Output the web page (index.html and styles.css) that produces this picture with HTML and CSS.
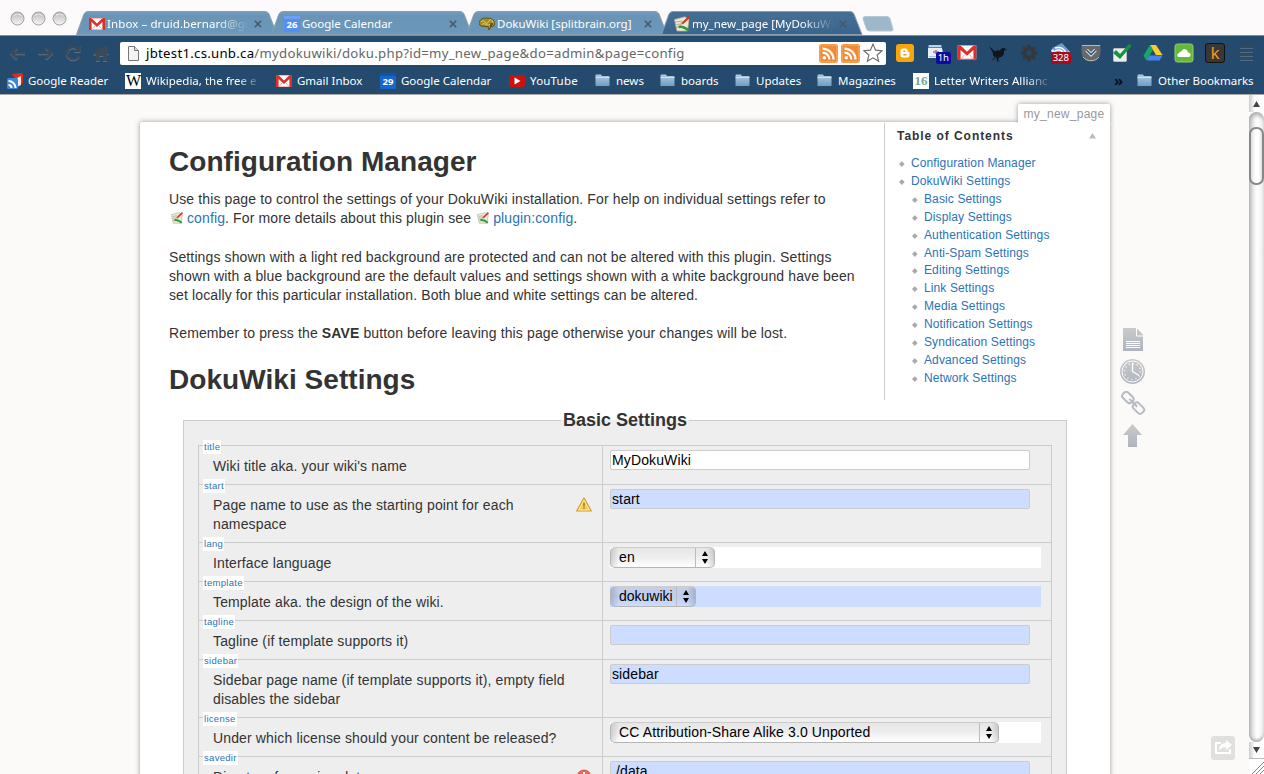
FILE: index.html
```html
<!DOCTYPE html>
<html lang="en">
<head>
<meta charset="utf-8">
<title>my_new_page [MyDokuWiki]</title>
<link rel="stylesheet" href="styles.css">
</head>
<body>
<svg class="defs" width="0" height="0">
  <defs>
    <linearGradient id="gTab" x1="0" y1="0" x2="0" y2="1"><stop offset="0" stop-color="#739ebd"/><stop offset=".2" stop-color="#6994b5"/><stop offset="1" stop-color="#6b98bb"/></linearGradient>
    <linearGradient id="gAct" x1="0" y1="0" x2="0" y2="1"><stop offset="0" stop-color="#466f94"/><stop offset="1" stop-color="#3b658b"/></linearGradient>
    <linearGradient id="gLight" x1="0" y1="0" x2="0" y2="1"><stop offset="0" stop-color="#b4b4b4"/><stop offset=".5" stop-color="#d8d8d8"/><stop offset="1" stop-color="#f6f6f6"/></linearGradient>
    <linearGradient id="gFold" x1="0" y1="0" x2="0" y2="1"><stop offset="0" stop-color="#b1cde0"/><stop offset="1" stop-color="#6f9dc3"/></linearGradient>
    <linearGradient id="gTool" x1="0" y1="0" x2="0" y2="1"><stop offset="0" stop-color="#c9cacb"/><stop offset="1" stop-color="#afb4bf"/></linearGradient>
    <symbol id="tab" viewBox="0 0 202 24"><path d="M.5 23.500 8 3Q9 .5 12 .5H189Q192 .5 193 3L201 23.500Z" stroke="#8b9dac" stroke-width="1"/></symbol>
    <symbol id="gmail" viewBox="0 0 16 12"><path fill="#fff" d="M0 0h16v12H0z"/><path fill="#d8322a" d="M0 0h2.400L8 5.600 13.600 0H16v12h-2.600V4L8 9 2.600 4v8H0z"/><path fill="none" stroke="#e88" stroke-width=".7" d="M3 11.500 6 8M13 11.500 10 8M2 .3h12M2 11.700h12"/></symbol>
    <symbol id="rss" viewBox="0 0 19 19"><rect width="19" height="19" rx="3" fill="#f08a34"/><rect x="1" y="1" width="17" height="17" rx="2" fill="none" stroke="#f8b26a"/><circle cx="5.300" cy="13.700" r="1.800" fill="#fff"/><path d="M3.500 8.600a6.900 6.900 0 0 1 6.900 6.900M3.500 4.600a11 11 0 0 1 11 10.900" fill="none" stroke="#fff" stroke-width="2.200"/></symbol>
    <symbol id="folder" viewBox="0 0 15 13"><path fill="url(#gFold)" d="M.5 1.500Q.5.500 1.500.500H6l1 1.500h6.500Q14.500 2 14.500 3v8.500Q14.500 12 14 12H1Q.5 12 .5 11.500z"/><path d="M.5 3.500h14" stroke="#dbe9f3" stroke-width=".8"/></symbol>
    <symbol id="doku" viewBox="0 0 16 16"><path fill="#efe9da" stroke="#b7ab90" stroke-width=".8" d="M.5 3.500 11 .8 15 3.500 13.500 15H3z"/><path d="M2 6 8 5M2.500 8.500 6.500 8M3 11h3" stroke="#a09684" stroke-width=".8"/><path d="M15.300.8 8 7.800" stroke="#cf3c25" stroke-width="2.200"/><path d="M8.800 7 5.500 10.500 7 6.500z" fill="#d99a62"/><path d="M4.500 11Q9 9.500 14.500 14.500" stroke="#24a33a" stroke-width="2.500" fill="none"/></symbol>
    <symbol id="x" viewBox="0 0 8 8"><path d="M.8.800 7.200 7.200M7.200.800.8 7.200" stroke="#455869" stroke-width="1.500"/></symbol>
    <symbol id="ud" viewBox="0 0 8 13"><path d="M4 0 7 5H1zM4 13 1 8h6z"/></symbol>
    <symbol id="light" viewBox="0 0 15 15"><circle cx="7.500" cy="7.500" r="6.500" fill="url(#gLight)" stroke="#a2a2a2"/><path d="M4 4.500Q7.500 1.500 11 4.500" fill="none" stroke="#eee" stroke-width="1.200"/></symbol>
  </defs>
</svg>

<header class="browser">
  <div class="tabstrip">
    <div class="lights"><svg><use href="#light"/></svg><svg><use href="#light"/></svg><svg><use href="#light"/></svg></div>
    <div class="tab"><svg class="shape" fill="url(#gTab)"><use href="#tab"/></svg><svg class="fav" viewBox="0 0 16 16"><use href="#gmail" y="2" width="16" height="12"/></svg><span class="ttl fade t1">Inbox – druid.bernard@gm</span><svg class="x"><use href="#x"/></svg></div>
    <div class="tab"><svg class="shape" fill="url(#gTab)"><use href="#tab"/></svg><span class="fav cal lite">26</span><span class="ttl">Google Calendar</span><svg class="x"><use href="#x"/></svg></div>
    <div class="tab"><svg class="shape" fill="url(#gTab)"><use href="#tab"/></svg><svg class="fav" viewBox="0 0 16 16"><path d="M0 8Q0 2 7 2q9 0 9 6-1 3-4 2.500L10 14 9 10.500Q1 11 0 8" fill="#a38c22" stroke="#5f5216" stroke-width="1"/><path d="M2 6q2-3 4 0t4-1 4 2M3 8.500q2-2 4 0t5-1" fill="none" stroke="#dccb6c"/><path d="M11 8h3M11 10h2" stroke="#5b4310" stroke-width="1.500"/></svg><span class="ttl">DokuWiki [splitbrain.org]</span><svg class="x"><use href="#x"/></svg></div>
    <div class="tab active"><svg class="shape" fill="url(#gAct)"><use href="#tab"/></svg><svg class="fav"><use href="#doku"/></svg><span class="ttl fade">my_new_page [MyDokuWi</span><svg class="x"><use href="#x"/></svg></div>
    <svg class="newtab" viewBox="0 0 32 16"><path d="M3 .5H25q2 0 3 2L31 13q.4 2-1.500 2H8q-3 0-3.500-2L1 3Q.6.600 3 .5" fill="#9db8cb" stroke="#b5c8d5"/></svg>
  </div>

  <div class="toolbar">
    <div class="nav">
      <svg viewBox="0 0 18 18"><path d="M3 9h14M9 3.500 3.500 9 9 14.500"/></svg>
      <svg viewBox="0 0 18 18"><path d="M2 9h14M10 3.500 15.500 9 10 14.500"/></svg>
      <svg viewBox="0 0 18 18"><path d="M14.500 11.500A6 6 0 1 1 13.500 5"/><path class="solid" d="M9.500 8h7V1z"/></svg>
      <svg viewBox="0 0 18 18"><path class="solid" d="M1 9.500 9 2l3 2.500V2h2.500v5L17 9.500l-1.200 1.200L15 10v7h-4v-5H7.500v5H4v-7l-1.500.9z"/></svg>
    </div>
    <div class="omni">
      <svg class="doc" viewBox="0 0 11 15"><path d="M.5.500h6l4 4v10H.5z" fill="#f4f4f4" stroke="#777"/><path d="M6.500.500v4h4" fill="#ddd" stroke="#777"/></svg>
      <span class="url"><b>jbtest1.cs.unb.ca</b>/mydokuwiki/doku.php?id=my_new_page&amp;do=admin&amp;page=config</span>
      <svg class="r"><use href="#rss"/></svg><svg class="r"><use href="#rss"/></svg>
      <svg class="star" viewBox="0 0 18 18"><path d="m9 1 2.300 5.400 5.900.500-4.500 3.900 1.400 5.700L9 13.400 3.900 16.500l1.400-5.700L.8 6.900l5.900-.5z" fill="#fff" stroke="#6a6a6a" stroke-width="1"/></svg>
    </div>
    <div class="ext">
      <svg viewBox="0 0 20 20"><rect x="1" y="1" width="18" height="18" rx="3" fill="#f9a60c"/><path d="M8 5.500h2.500q2 0 2 2 0 1 .7 1.200 1.300.4 1.300 1.600v1.700q0 2.500-2.500 2.500H8q-2.500 0-2.500-2.500V8q0-2.500 2.500-2.500" fill="#fff"/><path d="M8.300 8.200h2M8.300 11.700h3.200" stroke="#f59b0c" stroke-width="1.500"/></svg>
      <div class="e"><svg viewBox="0 0 20 20"><path fill="#4e86c6" d="M2 2h14v4H2z"/><path fill="#e8eef6" d="M2 5h14l2 10H2z"/><path d="M3 3h12" stroke="#dceafa" stroke-width="1.500"/><path d="M3 13.500h14" stroke="#9fc0e2"/><path d="M7 9q3-3 6 0-3 3-6 0" fill="#fff" stroke="#d66"/><circle cx="10" cy="9" r="1" fill="#479"/></svg><span class="badge blue">1h</span></div>
      <svg viewBox="0 0 20 20"><use href="#gmail" x=".5" y="2" width="19" height="14.500"/></svg>
      <svg viewBox="0 0 20 20"><path d="M1 3 7 8.500q3-2 5-1 1-3 4-2.500l3 2-3 .5q1 6-5 7l-1 3 2 1H9l-.5-4Q4 13 5 10z" fill="#111519"/><path d="m7 13-1 3-2 1" fill="none" stroke="#222" stroke-width="1"/></svg>
      <svg viewBox="0 0 20 20"><circle cx="10" cy="10" r="4.500" fill="none" stroke="#35393d" stroke-width="4"/><path d="M10 1.500v4M10 14.500v4M1.500 10h4M14.500 10h4M4 4l3 3M13 13l3 3M16 4l-3 3M7 13l-3 3" stroke="#35393d" stroke-width="3"/></svg>
      <div class="e"><svg viewBox="0 0 20 20"><path d="M1 7 12 1l8 8-9 6-8-2z" fill="#e3edf8"/><path d="M2 5 12 0l7 8-9 6z" fill="#6c9ad2"/><path d="M6 11q3-2 5 2M5 8q6-3 9 3M5 5q8-2 11 5" fill="none" stroke="#fff" stroke-width="1.400"/></svg><span class="badge red">328</span></div>
      <svg viewBox="0 0 20 20"><path d="M.5 2h19v7a9.500 9.500 0 0 1-19 0z" fill="#67686a"/><path d="M1 2.500h18M2 14a9.500 8 0 0 0 16 0" fill="none" stroke="#bbb"/><path d="m5.500 7 4.500 4.500L14.500 7" fill="none" stroke="#ddd" stroke-width="3.500"/><path d="m5.500 7 4.500 4.500L14.500 7" fill="none" stroke="#2f5273" stroke-width="1.500"/></svg>
      <svg viewBox="0 0 20 20"><rect x="1.500" y="5.500" width="13" height="13" rx="1" fill="#eee" stroke="#bbb"/><path d="m1 10 3-3 4 4L17 1l2.500 2L8 16z" fill="#12963b"/></svg>
      <svg viewBox="0 0 20 20"><path d="M7 2h6l6.500 10H13z" fill="#f8cb30"/><path d="M7 2 .5 12.500l3 5L10 7z" fill="#16a765"/><path d="M6.500 12.500h13l-3 5h-13z" fill="#4384ef"/></svg>
      <svg viewBox="0 0 20 20"><rect x="1" y="1" width="18" height="18" rx="2.500" fill="#65b83c" stroke="#94cf66"/><path d="M4 14q-2-3 1-4 1-2 2.500-1.500Q9 5 12 6.500q2 1 2 3 3 .3 2.500 3-.5 1.500-2 1.500z" fill="#fff"/></svg>
      <span class="k">k</span>
      <svg viewBox="0 0 20 20"><path d="M4 4h13M4 8h13M4 12h13M4 16h13" stroke="#35495c" stroke-width="2"/><path d="M4 5.500h13M4 9.500h13M4 13.500h13M4 17.500h13" stroke="#55748f" stroke-width=".8"/></svg>
    </div>
  </div>

  <div class="bookmarks">
    <span class="bm"><svg viewBox="0 0 16 16"><path fill="#d8301e" d="M5 1 14 0l2 1v9l-3 2z"/><path fill="#f3e5df" d="M14 3v9l-6 3V6z"/><rect y="5" width="11" height="11" rx="1.500" fill="#3b84d8"/><path d="M1.500 12a3 3 0 0 1 3 3M1.500 8a7 7 0 0 1 7 7" fill="none" stroke="#fff" stroke-width="2"/></svg><i>Google Reader</i></span>
    <span class="bm"><span class="wiki">W</span><i class="fade b2">Wikipedia, the free e</i></span>
    <span class="bm"><svg viewBox="0 0 16 16"><use href="#gmail" y="2" width="16" height="12"/></svg><i>Gmail Inbox</i></span>
    <span class="bm"><span class="cal">29</span><i>Google Calendar</i></span>
    <span class="bm"><svg viewBox="0 0 16 16"><rect y="2" width="16" height="12" rx="2.500" fill="#c9120e"/><path d="M5.500 4.500v7l6-3.500z" fill="#fff"/></svg><i class="b5">YouTube</i></span>
    <span class="bm"><svg><use href="#folder" width="15" height="13" y="1"/></svg><i>news</i></span>
    <span class="bm"><svg><use href="#folder" width="15" height="13" y="1"/></svg><i>boards</i></span>
    <span class="bm"><svg><use href="#folder" width="15" height="13" y="1"/></svg><i>Updates</i></span>
    <span class="bm"><svg><use href="#folder" width="15" height="13" y="1"/></svg><i>Magazines</i></span>
    <span class="bm"><span class="s16">16</span><i class="fade b10">Letter Writers Allianc</i></span>
    <b class="more">»</b>
    <span class="bm"><svg><use href="#folder" width="15" height="13" y="1"/></svg><i>Other Bookmarks</i></span>
  </div>
</header>

<div class="viewport">
  <div class="site">
    <div class="page">
      <span class="pageid">my_new_page</span>
      <nav class="toc">
        <h3>Table of Contents <svg viewBox="0 0 7 6"><path d="M3.500 0 7 5.500H0z" fill="#bbb"/></svg></h3>
        <ul>
          <li>Configuration Manager</li>
          <li>DokuWiki Settings
            <ul><li>Basic Settings</li><li>Display Settings</li><li>Authentication Settings</li><li>Anti-Spam Settings</li><li>Editing Settings</li><li>Link Settings</li><li>Media Settings</li><li>Notification Settings</li><li>Syndication Settings</li><li>Advanced Settings</li><li>Network Settings</li></ul>
          </li>
        </ul>
      </nav>
      <article class="text">
        <h1>Configuration Manager</h1>
        <p>Use this page to control the settings of your DokuWiki installation. For help on individual settings refer to<br><svg class="iw"><use href="#doku"/></svg><a>config</a>. For more details about this plugin see <svg class="iw"><use href="#doku"/></svg><a>plugin:config</a>.</p>
        <p>Settings shown with a light red background are protected and can not be altered with this plugin. Settings<br>shown with a blue background are the default values and settings shown with a white background have been<br>set locally for this particular installation. Both blue and white settings can be altered.</p>
        <p>Remember to press the <b>SAVE</b> button before leaving this page otherwise your changes will be lost.</p>
        <h1>DokuWiki Settings</h1>
      </article>
      <fieldset>
        <legend>Basic Settings</legend>
        <div class="table">
          <div class="row"><div class="label"><span class="key">title</span>Wiki title aka. your wiki's name</div><div class="val"><div class="inp white">MyDokuWiki</div></div></div>
          <div class="row"><div class="label"><span class="key">start</span>Page name to use as the starting point for each<br>namespace<svg class="alert" viewBox="0 0 16 15"><path d="M8 1 15.300 14H.7z" fill="#fff3b8" stroke="#d9952b" stroke-width="1.200" stroke-linejoin="round"/><path d="M8 4 12.800 12.600H3.200z" fill="#f6cf45"/><path d="M8 5.500v4M8 10.500v1.500" stroke="#a87a1c" stroke-width="1.500"/></svg></div><div class="val"><div class="inp">start</div></div></div>
          <div class="row"><div class="label"><span class="key">lang</span>Interface language</div><div class="val"><div class="sel white"><div class="pop w1"><span>en</span><svg><use href="#ud"/></svg></div></div></div></div>
          <div class="row"><div class="label"><span class="key">template</span>Template aka. the design of the wiki.</div><div class="val"><div class="sel"><div class="pop w2"><span>dokuwiki</span><svg><use href="#ud"/></svg></div></div></div></div>
          <div class="row"><div class="label"><span class="key">tagline</span>Tagline (if template supports it)</div><div class="val"><div class="inp"></div></div></div>
          <div class="row"><div class="label"><span class="key">sidebar</span>Sidebar page name (if template supports it), empty field<br>disables the sidebar</div><div class="val"><div class="inp">sidebar</div></div></div>
          <div class="row"><div class="label"><span class="key">license</span>Under which license should your content be released?</div><div class="val"><div class="sel white"><div class="pop w3"><span>CC Attribution-Share Alike 3.0 Unported</span><svg><use href="#ud"/></svg></div></div></div></div>
          <div class="row"><div class="label"><span class="key">savedir</span>Directory for saving data<svg class="alert" viewBox="0 0 16 15"><circle cx="8" cy="8" r="7" fill="#ee6a55" stroke="#d9543f"/><path d="M8 3v5M8 10v2" stroke="#fff" stroke-width="2"/></svg></div><div class="val"><div class="inp">./data</div></div></div>
        </div>
      </fieldset>
    </div>
    <aside class="tools">
      <svg viewBox="0 0 26 26"><path fill="url(#gTool)" d="M3 1h13.500L23 7.500V24H3z"/><path d="M16.500 1v8H23M6 14.500h14M6 16.500h14M6 18.500h14M6 20.500h14" fill="none" stroke="#fff" stroke-width="1"/></svg>
      <svg viewBox="0 0 26 26"><circle cx="12.500" cy="12.500" r="12.500" fill="url(#gTool)"/><circle cx="12.500" cy="12.500" r="10.500" fill="none" stroke="#fff" stroke-width="1"/><circle cx="12.500" cy="12.500" r="8" fill="none" stroke="#fff" stroke-width="1.500" stroke-dasharray="1 3.190"/><path d="M12.500 4v8.500l6.500 4" fill="none" stroke="#fff" stroke-width="1.300"/></svg>
      <svg viewBox="0 0 26 26"><g transform="rotate(45 13 12)" fill="none" stroke="#b7bac1" stroke-width="2"><rect x="-.5" y="8" width="12" height="7.500" rx="3"/><rect x="14.500" y="8" width="12" height="7.500" rx="3"/><path d="M7.500 11.700h11"/></g></svg>
      <svg viewBox="0 0 26 26"><path fill="url(#gTool)" d="m12.500 1 9.500 11h-5v12H8V12H3z"/></svg>
    </aside>
    <svg class="share" viewBox="0 0 24 24"><rect width="24" height="24" rx="3" fill="#e0e0de"/><path d="M10 7H5v10h14v-4" fill="none" stroke="#fff" stroke-width="2"/><path d="M8 14q0-7 7-7V4l6 5-6 5v-3q-4 0-7 3" fill="#fff"/></svg>
  </div>
  <div class="scroll">
    <div class="arr"><svg viewBox="0 0 7 6"><path d="M3.500 0 7 6H0z"/></svg></div>
    <div class="track"><div class="thumb"></div></div>
    <div class="arr dn"><svg viewBox="0 0 7 6"><path d="M0 0h7L3.500 6z"/></svg></div>
    <div class="grip"><svg viewBox="0 0 15 15"><path d="M3 15 15 3M7 15l8-8M11 15l4-4" stroke="#888"/></svg></div>
  </div>
</div>
</body>
</html>
```

FILE: styles.css
```css
* { box-sizing: border-box; }
body { margin: 0; width: 1264px; height: 774px; overflow: hidden; display: flex; flex-direction: column; font-family: "Liberation Sans", Arial, sans-serif; font-size: 14px; line-height: 19px; color: #333; background: #fbfaf9; }
svg { display: block; flex: none; }
.defs { position: absolute; }

/* Browser chrome */
.browser { height: 95px; flex: none; background: #244b6e; border-bottom: 1px solid #aaa6a4; font-family: "Noto Sans", sans-serif; color: #fff; }
.tabstrip { height: 36px; background: #fcfafb; display: flex; align-items: flex-end; border-bottom: 1px solid #7690a6; }
.lights { width: 76px; padding: 0 0 9px 10px; display: flex; gap: 6px; }
.lights svg { width: 15px; height: 15px; }
.tab { position: relative; width: 202px; height: 24px; margin-right: -7px; display: flex; align-items: center; padding: 1px 0 0 13px; }
.tab .shape { position: absolute; left: 0; top: 0; width: 202px; height: 24px; }
.tab > *:not(.shape) { position: relative; }
.active { z-index: 1; }
.fav { width: 16px; height: 16px; flex: none; }
.ttl { margin-left: 2px; font-size: 11.5px; line-height: 16px; white-space: nowrap; width: 142px; flex: none; }
.t1 { letter-spacing: .1px; }
.x { width: 8px; height: 8px; margin-left: 5px; }
.fade { -webkit-mask-image: linear-gradient(90deg, #000 78%, transparent); mask-image: linear-gradient(90deg, #000 78%, transparent); }
.newtab { width: 32px; height: 16px; margin: 0 0 3px 6px; }
.cal { width: 16px; height: 16px; flex: none; background: #1765cf; border-top: 3px solid #0d55b5; font: bold 9.5px/12px "Noto Sans", sans-serif; text-align: center; color: #fff; }
.cal.lite { background: #548ff0; border-color: #6ba0f5; }
.toolbar { height: 34px; display: flex; align-items: center; padding-left: 8px; }
.nav { display: flex; gap: 10px; width: 112px; }
.nav svg { width: 18px; height: 18px; fill: none; stroke: #3a4a59; stroke-width: 2.6; filter: drop-shadow(0 1px 0 #55758f); }
.nav .solid { fill: #3a4a59; stroke: none; }
.omni { width: 766px; height: 23px; background: #fff; border-radius: 2px; display: flex; align-items: center; padding-left: 8px; }
.doc { width: 11px; height: 15px; }
.url { margin-left: 7px; width: 673px; font-size: 13.2px; line-height: 20px; color: #666; letter-spacing: .27px; white-space: nowrap; }
.url b { font-weight: 400; color: #000; }
.omni .r { width: 19px; height: 19px; margin-right: 3px; }
.omni .star { width: 20px; height: 20px; }
.ext { display: flex; gap: 11px; padding-left: 9px; }
.ext svg, .e, .k { width: 20px; height: 20px; flex: none; }
.e { position: relative; }
.badge { position: absolute; top: 9px; right: -5px; height: 12px; padding: 0 2px; border-radius: 2px; font: 9.500px/12px "Noto Sans", sans-serif; color: #fff; }
.blue { background: #0b0ba0; }
.red { background: #a60b20; right: -1px; }
.k { background: #373737; border: 1px solid #111; border-radius: 3px; color: #f79a12; font: 17px/17px "Noto Sans", sans-serif; text-align: center; }
.bookmarks { height: 22px; display: grid; grid-template-columns: 118px 151px 104px 129px 86px 65px 75px 82px 96px 203px 21px 120px; align-items: center; padding-left: 7px; }
.bm { display: flex; align-items: center; }
.bm > svg { width: 16px; height: 16px; }
.bm i { font-style: normal; font-size: 11.5px; line-height: 16px; margin-left: 5px; white-space: nowrap; }
.bm .b5 { letter-spacing: .2px; }
.wiki { width: 16px; height: 16px; background: #fff; color: #000; font: 16px/16px "Liberation Serif", serif; letter-spacing: -1px; text-align: center; }
.s16 { width: 16px; height: 16px; background: #fff; color: #7aa29c; font: bold 13px/16px "Liberation Serif", serif; text-align: center; }
.b2 { width: 116px; }
.b10 { width: 118px; letter-spacing: .05px; }
.more { font-size: 15px; line-height: 14px; color: #071019; margin: -3px 0 0 -2px; }

/* Wiki page */
.viewport { flex: 1; min-height: 0; display: flex; }
.site { position: relative; width: 1249px; display: flex; padding: 27px 0 0 140px; overflow: hidden; }
.page { position: relative; width: 970px; height: 720px; flex: none; background: #fff; border-radius: 2px 0 0 0; box-shadow: 0 0 5px #999; }
.pageid { position: absolute; right: 0; top: -18px; width: 92px; height: 19px; background: #fff; border-radius: 2px 2px 0 0; box-shadow: 0 0 5px #999; clip-path: inset(-5px -5px 0 -5px); font-size: 12px; line-height: 20px; letter-spacing: .25px; color: #999; text-align: center; }
.toc { float: right; width: 226px; height: 277px; margin-top: 1px; border-left: 1px solid #ccc; padding: 4px 14px 0 12px; font-size: 12px; line-height: 18px; letter-spacing: .12px; color: #2b73b7; position: relative; }
.toc h3 { margin: 0 0 9.900px; font-size: 12px; line-height: 18px; letter-spacing: .95px; color: #333; display: flex; justify-content: space-between; align-items: center; }
.toc h3 svg { width: 7px; height: 6px; }
.toc ul { list-style: none; margin: 0; padding: 0 0 0 14px; line-height: 17.920px; }
.toc ul ul { padding-left: 13px; }
.toc li::before { content: ""; float: left; width: 3.600px; height: 3.600px; margin: 7px 0 0 -11.300px; background: #aaa; transform: rotate(45deg); }
.text { padding: 24px 0 0 29px; letter-spacing: .12px; }
h1 { margin: 0; font-size: 28px; line-height: 32px; height: 44px; letter-spacing: .05px; }
p { margin: 0 0 19.500px; white-space: nowrap; }
.text p + h1 { padding-top: 1px; height: 48px; }
a { color: #2b73b7; }
.iw { display: inline-block; width: 12px; height: 12px; margin: 0 4px 0 2px; vertical-align: -1px; }
fieldset { width: 884px; margin: 0 0 0 43px; padding: 14px 14px 0; border: 1px solid #ccc; border-bottom: 0; background: #eee; height: 400px; }
legend { margin: 0 auto; padding: 0 2px; font-size: 18px; font-weight: 700; line-height: 20px; position: relative; top: -1px; }
.table { border: 1px solid #ccc; border-top: 0; width: 854px; }
.row { display: flex; border-top: 1px solid #ccc; }
.label { position: relative; width: 404px; padding: 11px 0 8px 14px; border-right: 1px solid #ccc; white-space: nowrap; letter-spacing: .14px; }
.key { position: absolute; left: 4px; top: -6px; height: 14px; padding: 0 1px; background: #fff; color: #2b73b7; font-size: 9.500px; line-height: 14px; letter-spacing: .3px; }
.alert { position: absolute; right: 10px; top: 12px; width: 16px; height: 15px; }
.val { padding: 4px 0 0 7px; color: #000; letter-spacing: .12px; }
.inp { width: 420px; height: 20px; border: 1px solid #ccc; border-radius: 2px; background: #cdf; padding-left: 1px; line-height: 19px; }
.sel { width: 431px; height: 21px; background: #cdf; }
.white { background: #fff; }
.pop { height: 21px; border: 1px solid #b5b5b5; border-top-color: #ccc; border-radius: 5px; display: flex; background: linear-gradient(90deg, #0002, #0000 8px, #0000 calc(100% - 8px), #0002), linear-gradient(#e6e6e6, #eee 50%, #fff); line-height: 19px; padding-left: 8px; }
.sel:not(.white) .pop { background: linear-gradient(90deg, #0002, #0000 8px, #0000 calc(100% - 8px), #0002), linear-gradient(#c5cfe6, #becdee 50%, #cdf); }
.pop span { flex: 1; border-right: 1px solid #bbb; }
.pop svg { width: 8px; height: 13px; margin: 3px 5px; }
.w1 { width: 105px; }
.w2 { width: 86px; letter-spacing: 0; }
.w3 { width: 389px; }
.tools { padding: 205px 0 0 10px; display: flex; flex-direction: column; gap: 6px; }
.tools svg { width: 26px; height: 26px; }
.share { position: absolute; left: 1211px; top: 641px; width: 24px; height: 24px; }

/* Scrollbar */
.scroll { width: 15px; display: flex; flex-direction: column; background: #fff; }
.arr { height: 17px; display: flex; align-items: center; justify-content: center; background: linear-gradient(90deg, #ccc, #fff 6px); }
.arr svg { width: 7px; height: 6px; fill: #444; }
.track { flex: 1; border-radius: 8px; background: linear-gradient(90deg, #bbb, #eee 5px, #fff 8px, #eee); box-shadow: inset 0 5px 4px -2px #aaa, inset 0 -3px 3px -1px #aaa; padding-top: 15px; }
.thumb { height: 58px; border: 2px solid #888; border-radius: 7px; background: linear-gradient(90deg, #ddd, #fff 4px, #fff 8px, #ddd); }
.arr.dn { border-bottom: 1px solid #bbb; }
.grip { height: 15px; }
.grip svg { width: 15px; height: 15px; }
```
